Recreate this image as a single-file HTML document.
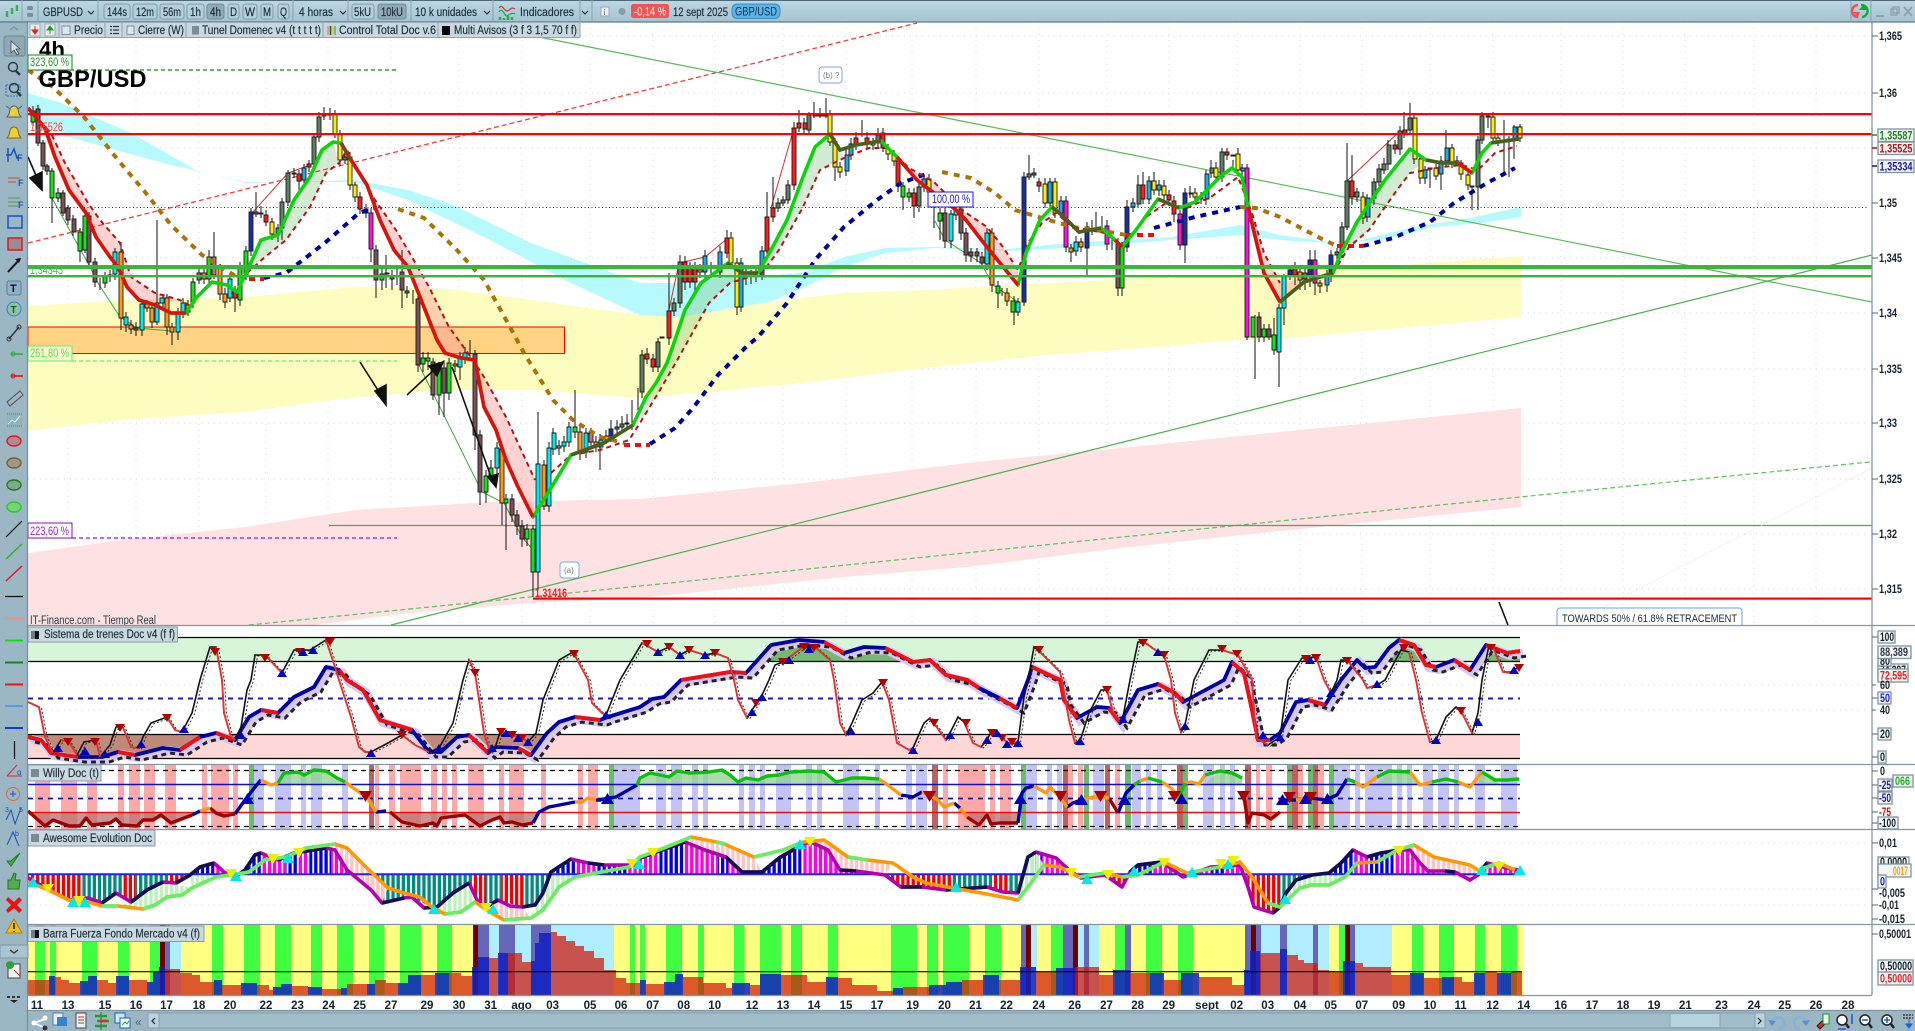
<!DOCTYPE html>
<html><head><meta charset="utf-8"><title>GBP/USD</title>
<style>
html,body{margin:0;padding:0;background:#fff;overflow:hidden}
svg{display:block}
text{font-family:"Liberation Sans",sans-serif;font-size:11.5px;fill:#1b2a34}
.ax{font-size:11.5px;font-weight:bold;fill:#14222c}
.lb{font-size:11.5px;fill:#1b2a34;stroke:#1b2a34;stroke-width:.15}
.bx{fill:#f4f6f6;stroke:#7d939f;stroke-width:1.3}
.bt{fill:#b4cfdb;stroke:#7f9daa;stroke-width:1}
.bp{fill:#8fa9b5;stroke:#6f8995;stroke-width:1}
.sp{stroke:#86a3b0;stroke-width:1}
</style></head><body>
<svg xmlns="http://www.w3.org/2000/svg" width="1915" height="1031" viewBox="0 0 1915 1031">
<defs>
<linearGradient id="tb" x1="0" y1="0" x2="0" y2="1"><stop offset="0" stop-color="#bdd7e3"/><stop offset="1" stop-color="#a4c3d0"/></linearGradient>
<clipPath id="cm"><rect x="28" y="22" width="1844" height="603"/></clipPath>
<clipPath id="c2"><rect x="28" y="626" width="1844" height="138"/></clipPath>
<clipPath id="c3"><rect x="28" y="765" width="1844" height="64"/></clipPath>
<clipPath id="c4"><rect x="28" y="830" width="1844" height="94"/></clipPath>
<pattern id="pB" width="5.15" height="10" patternUnits="userSpaceOnUse"><rect width="3.3" height="10" fill="#0000e0"/></pattern>
<pattern id="pM" width="5.15" height="10" patternUnits="userSpaceOnUse"><rect width="3.3" height="10" fill="#ff00e0"/></pattern>
<pattern id="pR" width="5.15" height="10" patternUnits="userSpaceOnUse"><rect width="3.3" height="10" fill="#f00000"/></pattern>
<pattern id="pT" width="5.15" height="10" patternUnits="userSpaceOnUse"><rect width="3.3" height="10" fill="#008a80"/></pattern>
<pattern id="pP" width="5.15" height="10" patternUnits="userSpaceOnUse"><rect width="3.3" height="10" fill="#ffc4c4"/></pattern>
<pattern id="pG" width="5.15" height="10" patternUnits="userSpaceOnUse"><rect width="3.3" height="10" fill="#bdf2bd"/></pattern>
<clipPath id="hA"><path d="M28 874L28 878L53 892L69 900L88 898L102 903L116 893L131 902L147 890L163 882L176 883L190 875L200 867L214 863L224 872L235 877L245 870L255 855L261 853L278 860L294 853L326 848L335 850L347 870L359 880L371 890L382 903L404 898L412 897L424 908L437 907L453 893L469 883L478 902L486 907L498 900L510 906L522 907L535 905L543 893L551 872L571 859L588 863L604 865L629 865L640 858L662 850L685 842L705 850L720 855L726 857L742 872L762 872L779 858L793 850L801 843L813 843L828 850L840 870L856 871L885 875L901 887L922 887L946 890L987 887L1003 892L1018 893L1028 857L1036 852L1056 858L1069 870L1081 878L1105 875L1122 887L1130 872L1138 865L1162 862L1183 877L1211 867L1240 865L1248 887L1254 907L1273 913L1280 907L1286 893L1296 880L1312 875L1329 873L1341 863L1353 850L1367 857L1381 853L1399 850L1410 850L1420 863L1428 871L1445 871L1455 872L1470 880L1478 875L1487 863L1507 868L1519 870L1522 874z"/></clipPath>
</defs>

<rect width="1915" height="1031" fill="#fff"/>

<!-- MAIN PANE -->
<g clip-path="url(#cm)">
<path d="M28 36H1870M28 93H1870M28 148H1870M28 258H1870M28 313H1870M28 369H1870M28 423H1870M28 479H1870M28 534H1870M28 589H1870" stroke="#d5d5d5" stroke-dasharray="1 5" fill="none"/>
<path d="M68 22V625M136 22V625M199 22V625M266 22V625M328 22V625M391 22V625M459 22V625M522 22V625M590 22V625M653 22V625M715 22V625M783 22V625M846 22V625M912 22V625M976 22V625M1039 22V625M1107 22V625M1169 22V625M1237 22V625M1300 22V625M1362 22V625M1430 22V625M1493 22V625M1561 22V625M1623 22V625M1685 22V625M1754 22V625M1816 22V625" stroke="#dcdcdc" stroke-dasharray="1 5" fill="none"/>
<path d="M28 93L61 103L131 133L196 170L245 183L355 180L408 190L449 203L531 243L640 283L681 283L722 278L762 276L803 273L844 257L885 248L934 247L1007 249L1069 243L1171 237L1240 225L1280 235L1329 242L1361 240L1414 227L1470 218L1521 207V217L1482 223L1434 227L1381 240L1329 243L1280 240L1240 235L1171 240L1069 248L1007 251L934 248L885 253L844 267L803 288L762 305L722 310L681 318L640 315L571 283L490 240L408 200L355 182L245 182L163 163L69 137L28 115z" fill="#b6fafd"/>
<path d="M28 306L122 300L245 297L355 287L449 289L531 300L640 315L681 317L762 303L844 293L926 290L1048 283L1171 277L1280 273L1401 265L1521 256V317L1280 339L1236 340L1171 346L1048 355L926 368L803 383L652 397L640 398L531 390L449 390L355 397L245 412L122 420L28 431z" fill="#fefdc0"/>
<path d="M28 553L122 540L245 527L355 510L490 502L640 499L803 483L967 463L1130 447L1280 432L1521 408V507L1280 531L1130 547L967 567L844 577L640 598L531 603L408 613L314 625H28z" fill="#fee1e3"/>
<rect x="28" y="327" width="536.500" height="26.500" fill="#ff9a30" fill-opacity=".42" stroke="#f00" stroke-width="1"/>
<path d="M28 112L40 125L55 157L69 190L86 213L96 237L110 257L118 267L127 287L139 300L155 305L180 300L155 293L131 277L120 243L100 220L88 203L65 163L51 133z" fill="#ff9c9c" fill-opacity=".45"/>
<path d="M351 160L367 185L380 220L394 250L408 267L420 297L433 330L445 353L461 358L475 360L484 407L496 430L506 460L518 487L533 517L535 480L506 417L484 377L473 360L449 327L429 287L412 257L396 230L375 200L359 173L347 150z" fill="#ff9c9c" fill-opacity=".45"/>
<path d="M897 157L917 180L956 210L966 220L983 242L995 257L1018 285L1018 270L1003 247L987 227L962 210L934 182L909 168L889 148z" fill="#ff9c9c" fill-opacity=".45"/>
<path d="M1248 207L1256 240L1264 273L1280 302L1304 282L1333 273L1280 283L1264 253L1252 213z" fill="#ff9c9c" fill-opacity=".45"/>
<path d="M249 267L261 240L278 235L294 200L310 177L322 150L333 142L339 163L326 173L310 207L286 240L265 257L247 273z" fill="#7fc77f" fill-opacity=".35"/>
<path d="M646 397L656 383L667 363L675 340L685 310L701 283L728 263L762 273L771 250L787 220L803 177L815 147L830 134L844 158L820 170L803 207L779 250L762 273L730 283L709 303L689 339L679 357L660 390L640 423z" fill="#7fc77f" fill-opacity=".35"/>
<path d="M1341 253L1357 222L1385 180L1410 149L1426 160L1410 173L1397 190L1369 230L1349 247z" fill="#7fc77f" fill-opacity=".35"/>
<path d="M28 243L917 23" stroke="#f43c3c" stroke-width="1.3" stroke-dasharray="5 3" fill="none"/>
<path d="M28 70H397" stroke="#0a8a0a" stroke-width="1.2" stroke-dasharray="4 3" fill="none"/>
<path d="M72 361H397" stroke="#66f066" stroke-width="1.2" stroke-dasharray="4 3" fill="none"/>
<path d="M72 538H397" stroke="#a010d0" stroke-width="1.2" stroke-dasharray="4 3" fill="none"/>
<path d="M539 37L1872 302" stroke="#59b959" stroke-width="1.2" fill="none"/>
<path d="M391 625L1872 255" stroke="#4cb04c" stroke-width="1.2" fill="none"/>
<path d="M249 625L640 586L1280 521L1870 462" stroke="#5cc05c" stroke-width="1.2" stroke-dasharray="5 3" fill="none"/>
<path d="M329 525.500H1872" stroke="#4ea84e" stroke-width="1.2" fill="none"/>
<path d="M28 207.500H1869" stroke="#1a1ab4" stroke-dasharray="1 2.500" fill="none"/>
<path d="M1604 607L1872 468" stroke="#ddd" stroke-dasharray="1 2" fill="none"/>
<path d="M52 198L90 267L98 283L120 317L137 328L171 331M418 363L482 492L504 503L522 537L533 550M935 221L945 240L981 263L993 285L1018 302" stroke="#3ca83c" fill="none"/>
<path d="M253 212L288 173L310 165M669 310L679 263L705 257L728 238M771 208L794 128M1347 181L1400 131" stroke="#c83030" fill="none"/>

<!-- wicks -->
<path d="M33 106V126M38 105V146M43 140V170M47 164V175M52 168V223M58 188V202M63 190V216M68 205V225M73 215V236M80 228V262M85 212V253M89 212V268M95 258V287M100 278V290M105 272V288M110 270V282M115 248V280M121 242V330M126 312V332M131 320V334M136 322V336M142 300V336M147 300V312M152 304V328M157 220V325M163 294V310M167 294V335M172 323V345M178 308V340M183 298V318M188 300V316M193 278V308M199 268V284M204 268V284M209 250V283M214 232V279M220 264V300M225 288V308M230 274V302M235 286V312M240 262V306M246 246V280M251 208V256M256 192V217M261 206V218M266 210V226M272 218V240M278 224V242M282 198V240M288 170V206M294 168V178M299 170V192M304 164V184M309 160V172M314 133V170M319 112V142M324 107V120M330 108V120M335 110V138M340 130V166M345 152V164M350 152V190M355 182V202M360 192V214M366 204V218M371 208V262M376 245V298M382 268V290M386 255V288M392 270V290M397 268V285M402 250V308M407 286V298M413 290V304M418 295V372M423 352V372M428 352V370M433 358V400M439 362V415M444 360V417M449 358V400M455 360V372M460 352V380M465 347V364M470 340V360M475 350V450M480 430V505M486 470V503M491 460V482M497 442V475M502 444V525M506 494V550M512 494V522M517 510V535M522 520V547M527 524V546M533 525V597M538 412V590M544 460V510M549 442V512M553 428V455M559 440V455M564 436V452M569 422V447M575 390V438M580 426V460M586 428V458M591 428V447M596 436V452M600 434V470M606 430V444M611 420V442M617 420V434M622 416V432M627 414V428M632 400V430M638 388V410M642 350V398M647 348V364M653 354V372M658 338V372M669 273V345M674 298V316M680 255V308M685 256V290M690 262V288M695 262V296M700 264V278M705 250V280M711 262V278M720 246V278M727 230V258M731 232V268M737 258V315M741 258V312M746 268V285M751 270V284M756 268V282M762 246V280M767 192V256M773 177V222M778 198V212M783 196V206M788 180V204M794 122V190M799 110V132M804 118V134M809 112V134M814 102V118M820 108V118M826 98V118M830 110V146M835 138V181M840 162V178M846 150V176M851 138V160M856 132V150M862 120V137M867 132V150M873 138V150M878 128V148M883 128V152M888 144V160M894 150V166M898 156V192M903 182V210M909 188V202M914 188V218M919 182V212M924 174V192M929 174V198M934 204V228M940 208V240M945 208V248M951 210V248M956 205V220M961 204V240M966 228V262M971 248V262M977 248V262M982 252V268M987 228V270M992 228V292M998 281V308M1002 288V296M1007 288V306M1014 296V325M1018 298V316M1024 172V306M1029 155V180M1034 168V178M1039 178V192M1045 178V208M1050 178V208M1055 178V218M1061 196V218M1066 196V252M1071 244V262M1076 236V256M1081 238V252M1087 222V275M1092 220V235M1096 212V232M1102 216V232M1107 220V250M1112 238V250M1118 238V296M1122 242V296M1127 200V252M1133 198V212M1138 175V208M1143 172V204M1149 176V204M1154 172V195M1159 180V196M1164 180V200M1169 190V206M1174 196V222M1180 210V250M1185 188V263M1190 186V198M1195 188V202M1201 192V204M1206 170V205M1211 160V178M1216 162V182M1222 148V182M1227 148V160M1233 160V170M1238 148V176M1242 164V176M1247 164V340M1255 315V379M1259 312V342M1264 324V342M1269 324V340M1274 318V355M1279 304V387M1284 274V325M1290 265V280M1295 262V285M1300 268V290M1305 268V290M1310 250V287M1315 250V295M1320 280V293M1327 270V292M1331 250V282M1337 248V260M1342 222V258M1347 143V230M1352 155V205M1357 188V202M1363 192V224M1367 194V222M1374 178V205M1379 164V186M1384 158V174M1388 140V170M1395 140V154M1400 126V155M1404 112V138M1410 103V134M1414 114V164M1420 156V184M1425 166V184M1430 168V188M1436 164V180M1441 156V190M1446 130V166M1452 144V168M1457 156V166M1461 160V180M1468 172V190M1472 187V210M1478 136V210M1482 112V144M1488 114V128M1493 112V142M1498 134V146M1504 120V172M1509 136V177M1514 125V159M1520 124V142" stroke="#111" stroke-width="1" fill="none"/>

<g stroke="#1a1a1a" stroke-width=".9">
<path fill="#14e814" d="M31 111h4v11h-4zM50 171h4v27h-4zM56 193h4v5h-4zM78 232h4v19h-4zM83 216h4v34h-4zM103 277h4v6h-4zM191 282h4v21h-4zM207 257h4v22h-4zM238 268h4v32h-4zM244 251h4v24h-4zM380 274h4v6h-4zM421 358h4v6h-4zM426 358h4v3h-4zM437 368h4v27h-4zM447 363h4v30h-4zM484 476h4v16h-4zM489 468h4v8h-4zM504 499h4v4h-4zM525 529h4v10h-4zM531 529h4v43h-4zM573 427h4v5h-4zM901 186h4v11h-4zM907 193h4v4h-4zM938 213h4v8h-4zM996 286h4v7h-4zM1011 301h4v11h-4zM1120 247h4v41h-4zM1251 317h4v20h-4zM1262 329h4v8h-4zM1272 335h4v15h-4z"/>
<path fill="#7a5158" d="M36 109h4v34h-4zM41 143h4v23h-4zM45 166h4v5h-4zM61 193h4v20h-4zM66 208h4v12h-4zM72 219h4v13h-4zM87 216h4v46h-4zM93 262h4v20h-4zM374 250h4v30h-4zM400 272h4v18h-4zM416 299h4v66h-4zM431 362h4v33h-4zM442 368h4v25h-4zM473 354h4v81h-4zM478 435h4v57h-4zM510 499h4v16h-4zM515 515h4v11h-4zM520 526h4v13h-4zM943 213h4v28h-4zM959 209h4v24h-4zM964 233h4v22h-4zM969 252h4v4h-4zM975 252h4v4h-4zM980 257h4v6h-4zM1116 243h4v45h-4zM1257 317h4v20h-4zM1267 329h4v8h-4z"/>
<path fill="#d06a80" d="M212 257h4v18h-4zM589 433h4v9h-4z"/>
<path fill="#5f7f62" d="M108 275h4v1h-4zM134 328h4v2h-4zM197 273h4v7h-4zM254 212h4v2h-4zM259 213h4v1h-4zM276 228h4v6h-4zM280 202h4v26h-4zM286 173h4v29h-4zM292 173h4v1h-4zM312 137h4v27h-4zM317 117h4v20h-4zM322 114h4v2h-4zM328 114h4v1h-4zM343 157h4v3h-4zM385 273h4v1h-4zM390 277h4v2h-4zM405 291h4v2h-4zM620 424h4v3h-4zM615 427h4v2h-4zM625 423h4v1h-4zM640 355h4v37h-4zM656 342h4v25h-4zM660 337h4v1h-4zM672 303h4v8h-4zM678 262h4v41h-4zM776 203h4v5h-4zM781 200h4v3h-4zM786 185h4v15h-4zM807 115h4v15h-4zM813 115h4v1h-4zM818 115h4v1h-4zM823 115h4v1h-4zM860 144h4v1h-4zM876 135h4v8h-4zM917 187h4v19h-4zM1027 174h4v3h-4zM1032 173h4v2h-4zM1137 185h4v19h-4zM1189 193h4v1h-4zM1210 168h4v5h-4zM1220 152h4v25h-4zM1231 155h4v1h-4zM1303 273h4v6h-4zM1335 252h4v3h-4zM1340 227h4v25h-4zM1345 181h4v46h-4zM1355 192h4v5h-4zM1372 182h4v16h-4zM1377 169h4v13h-4zM1382 164h4v6h-4zM1387 145h4v19h-4zM1398 131h4v18h-4zM1408 118h4v12h-4zM1428 168h4v1h-4zM1470 186h4v1h-4zM1476 140h4v47h-4zM1480 116h4v24h-4zM1486 116h4v1h-4zM1502 141h4v1h-4zM1507 139h4v2h-4z"/>
<path fill="#00eaf2" d="M113 252h4v22h-4zM124 317h4v8h-4zM140 304h4v26h-4zM155 303h4v19h-4zM160 298h4v5h-4zM176 313h4v19h-4zM181 303h4v10h-4zM228 279h4v19h-4zM458 358h4v9h-4zM463 353h4v5h-4zM495 448h4v20h-4zM536 464h4v108h-4zM547 448h4v58h-4zM552 433h4v16h-4zM557 446h4v2h-4zM562 442h4v4h-4zM567 427h4v15h-4zM584 433h4v19h-4zM599 440h4v7h-4zM949 214h4v27h-4zM954 210h4v5h-4zM985 233h4v31h-4zM1016 302h4v10h-4zM1074 242h4v9h-4zM1277 308h4v44h-4zM1282 277h4v31h-4z"/>
<path fill="#1fa8e8" d="M302 168h4v12h-4zM703 256h4v16h-4zM718 252h4v20h-4zM739 263h4v44h-4zM760 251h4v24h-4zM845 155h4v16h-4zM849 144h4v11h-4zM922 179h4v8h-4zM1048 182h4v21h-4zM1059 201h4v12h-4zM1131 203h4v4h-4zM1147 181h4v18h-4zM1157 185h4v5h-4zM1205 174h4v25h-4zM1241 168h4v3h-4zM1325 276h4v9h-4zM1366 198h4v19h-4zM1423 170h4v8h-4zM1439 161h4v13h-4zM1445 148h4v13h-4zM1455 161h4v2h-4zM1513 127h4v12h-4z"/>
<path fill="#ff9a18" d="M119 252h4v66h-4zM129 325h4v4h-4zM145 304h4v4h-4zM150 308h4v14h-4zM165 298h4v29h-4zM170 327h4v5h-4zM186 305h4v7h-4zM202 273h4v6h-4zM218 268h4v26h-4zM223 294h4v8h-4zM453 364h4v2h-4zM500 449h4v54h-4zM542 465h4v41h-4zM578 432h4v20h-4zM594 442h4v5h-4zM605 436h4v4h-4zM990 233h4v52h-4zM1005 293h4v8h-4zM1069 248h4v4h-4zM1079 242h4v5h-4zM1298 272h4v8h-4zM1318 283h4v3h-4z"/>
<path fill="#ff1c1c" d="M264 215h4v7h-4zM297 174h4v7h-4zM307 164h4v3h-4zM358 197h4v12h-4zM364 209h4v4h-4zM233 291h4v7h-4zM645 354h4v5h-4zM651 359h4v8h-4zM667 311h4v27h-4zM683 262h4v20h-4zM688 268h4v14h-4zM693 268h4v14h-4zM725 238h4v15h-4zM765 217h4v34h-4zM771 208h4v9h-4zM792 128h4v57h-4zM797 123h4v5h-4zM803 123h4v6h-4zM854 138h4v6h-4zM865 138h4v6h-4zM881 133h4v15h-4zM896 161h4v25h-4zM912 193h4v13h-4zM1037 182h4v4h-4zM1141 185h4v14h-4zM1167 195h4v5h-4zM1172 201h4v13h-4zM1199 197h4v2h-4zM1225 152h4v3h-4zM1293 268h4v7h-4zM1350 181h4v16h-4zM1393 145h4v4h-4zM1403 130h4v4h-4z"/>
<path fill="#ffee00" d="M270 222h4v12h-4zM333 114h4v20h-4zM338 134h4v26h-4zM348 157h4v28h-4zM353 185h4v12h-4zM698 270h4v2h-4zM729 238h4v25h-4zM735 263h4v44h-4zM828 114h4v28h-4zM833 142h4v25h-4zM838 167h4v5h-4zM871 143h4v2h-4zM886 148h4v6h-4zM892 154h4v7h-4zM927 179h4v13h-4zM1043 184h4v19h-4zM1053 182h4v31h-4zM1152 181h4v9h-4zM1162 186h4v9h-4zM1193 193h4v4h-4zM1214 168h4v9h-4zM1236 154h4v16h-4zM1361 197h4v21h-4zM1413 118h4v41h-4zM1419 159h4v19h-4zM1434 168h4v8h-4zM1450 148h4v15h-4zM1459 163h4v11h-4zM1466 175h4v10h-4zM1491 117h4v21h-4zM1496 138h4v3h-4zM1518 127h4v11h-4z"/>
<path fill="#ff10e0" d="M369 213h4v36h-4zM1064 201h4v46h-4zM1105 226h4v18h-4zM1178 214h4v31h-4zM1245 168h4v169h-4zM1313 260h4v23h-4z"/>
<path fill="#1a2ea8" d="M249 212h4v39h-4zM609 429h4v7h-4zM1022 177h4v125h-4zM1085 227h4v21h-4zM1125 207h4v40h-4zM1183 193h4v52h-4zM1288 270h4v5h-4zM1308 260h4v15h-4zM1329 255h4v20h-4z"/>
</g>

<!-- MAs -->
<path d="M28 70L53 87L84 117L118 160L145 192L171 225L202 255L237 277M398 209L424 218L455 248L484 280L510 327L524 353L553 400L573 420L600 437L624 443M942 172L971 178L995 193L1015 210L1042 218L1073 227L1109 232L1126 235M1240 207L1256 208L1280 217L1320 238L1337 246" fill="none" stroke="#a97405" stroke-width="4" stroke-dasharray="6 6"/>
<path d="M264 278L286 273L326 242L359 213L375 208M650 444L675 428L693 408L718 375L748 345L758 337L787 303L815 260L844 227L877 200L901 183L926 174M1154 228L1195 217L1240 207M1363 246L1393 238L1430 222L1454 203L1487 183L1515 168" fill="none" stroke="#00009c" stroke-width="4" stroke-dasharray="6 6"/>
<path d="M249 279H264M624 445H650M1126 235H1154M1337 246H1363" fill="none" stroke="#e81010" stroke-width="4" stroke-dasharray="6 5"/>
<path d="M28 108L51 133L65 163L88 203L100 220L120 243L131 277L155 293L180 300L192 307M247 273L265 257L286 240L310 207L326 173L339 163L347 150L359 173L375 200L396 230L412 257L429 287L449 327L473 360L484 377L506 417L535 480M551 473L571 455L600 450L629 440L640 423L660 390L679 357L689 339L709 303L730 283L762 273L779 250L803 207L820 170L844 158L869 148L889 148L909 168L934 182L962 210L987 227L1003 247L1018 270L1028 243L1042 223L1056 213L1073 227L1105 233L1122 245L1146 217L1166 203L1187 208L1211 197L1238 177L1252 213L1264 253L1280 283M1333 273L1349 247L1369 230L1397 190L1410 173L1442 167L1462 165L1478 170L1495 153L1517 146" fill="none" stroke="#b01515" stroke-width="2" stroke-dasharray="5 4"/>
<path d="M28 108L45 128L55 157L69 190L86 213L96 237L110 257L118 267L127 287L139 300L155 305L171 313L186 313L196 298L212 282L227 285L237 292L249 267L261 240L278 235L294 200L310 177L322 150L333 142L341 143L351 160L367 185L380 220L394 250L408 267L420 297L433 330L437 340L445 353L461 358L475 360L484 407L496 430L506 460L518 487L533 517L551 488L571 455L604 443L633 425L646 397L656 383L667 363L675 340L685 310L701 283L728 263L742 273L758 273L771 250L787 220L803 177L815 147L830 134L840 150L856 145L881 141L897 157L917 180L956 210L966 220L983 242L995 257L1018 285L1026 253L1040 220L1052 207L1064 217L1079 232L1101 228L1115 240L1122 247L1136 230L1158 199L1179 208L1195 202L1220 177L1232 168L1242 177L1248 207L1256 240L1264 273L1280 302L1304 282L1333 273L1341 253L1357 222L1385 180L1410 149L1426 160L1442 163L1458 163L1472 173L1482 153L1491 143L1519 139" fill="none" stroke="#0bd40b" stroke-width="3.600" stroke-linejoin="round"/>
<path d="M28 108L45 128L55 157L69 190L86 213L96 237L110 257L118 267L127 287L139 300L155 305L171 313L186 313M351 160L367 185L380 220L394 250L408 267L420 297L433 330L437 340L445 353L461 358L475 360L484 407L496 430L506 460L518 487L533 517M897 157L917 180L956 210L966 220L983 242L995 257L1018 285M1248 207L1256 240L1264 273L1280 302M1115 240L1122 247M1458 163L1472 173" fill="none" stroke="#e00f0f" stroke-width="3.600" stroke-linejoin="round"/>
<path d="M571 455L604 443L633 425M727 263L742 273L758 273M830 134L840 150L856 145L881 141M1052 207L1064 217L1079 232L1101 228M1158 199L1179 208M1426 160L1442 163L1458 163M1491 143L1519 139M1280 302L1304 282L1333 273" fill="none" stroke="#4f5c1e" stroke-width="3.600"/>
<path d="M351 160L341 143" fill="none" stroke="#8a3a1a" stroke-width="3.600"/>

<!-- horizontals over candles -->
<rect x="28" y="113" width="1844" height="2.200" fill="#f00"/>
<rect x="28" y="133" width="1844" height="2.200" fill="#f00"/>
<rect x="28" y="265" width="1844" height="4.200" fill="#3cb43c"/>
<rect x="28" y="275" width="1844" height="2.400" fill="#3cb43c"/>
<rect x="533" y="597.500" width="1339" height="2.200" fill="#f00"/>

<!-- arrows -->
<g stroke="#111" stroke-width="1.600" fill="#111">
<path d="M28 157L38 180" fill="none"/><path d="M42 190L30 178L42 172z"/>
<path d="M360 362L381 395" fill="none"/><path d="M386 405L375 391L386 385z"/>
<path d="M407 395L436 368" fill="none"/><path d="M443 362L437 376L429 366z"/>
<path d="M452 367L491 477" fill="none"/><path d="M496 487L488 477L498 474z"/>
<path d="M1499 602L1508 625" fill="none"/>
</g>

<!-- text overlays -->
<text x="39" y="57" style="font-size:22px;font-weight:bold;fill:#000" textLength="26" lengthAdjust="spacingAndGlyphs">4h</text>
<text x="38.500" y="87" style="font-size:24px;font-weight:bold;fill:#000" textLength="108" lengthAdjust="spacingAndGlyphs">GBP/USD</text>
<rect x="28" y="55" width="44" height="15" fill="#fff" stroke="#0a8a0a" stroke-width="1"/>
<text x="30" y="66" style="fill:#1a9a2a" textLength="39" lengthAdjust="spacingAndGlyphs">323,60 %</text>
<text x="30" y="131" style="fill:#f04040" textLength="33" lengthAdjust="spacingAndGlyphs">1,35526</text>
<text x="30" y="274" style="fill:#4cc04c" textLength="33" lengthAdjust="spacingAndGlyphs">1,34343</text>
<rect x="28" y="346" width="44" height="15" fill="#fdf8d0" stroke="#66f066" stroke-width="1"/>
<text x="30" y="357" style="fill:#50e050" textLength="39" lengthAdjust="spacingAndGlyphs">261,80 %</text>
<rect x="28" y="523" width="44" height="15" fill="#fff" stroke="#8a10b0" stroke-width="1"/>
<text x="30" y="535" style="fill:#9a20d0" textLength="39" lengthAdjust="spacingAndGlyphs">223,60 %</text>
<text x="30" y="624" style="fill:#2a3a44" textLength="126" lengthAdjust="spacingAndGlyphs">IT-Finance.com - Tiempo Real</text>
<rect x="819" y="67" width="23" height="16" rx="3" fill="#fff" stroke="#7aa6f0"/>
<text x="823" y="78" style="font-size:8px;fill:#777">(b) ?</text>
<rect x="560" y="562" width="19" height="16" rx="3" fill="#fff" stroke="#7aa6f0"/>
<text x="564" y="573" style="font-size:8px;fill:#777">(a)</text>
<text x="535" y="597" style="fill:#f02020;font-weight:bold" textLength="32" lengthAdjust="spacingAndGlyphs">1,31416</text>
<rect x="928" y="192" width="45" height="15" fill="#fff" stroke="#1a1ad0"/>
<text x="932" y="203" style="fill:#1a1ad0" textLength="38" lengthAdjust="spacingAndGlyphs">100,00 %</text>
<rect x="1557" y="608" width="185" height="24" rx="3" fill="#fff" stroke="#6e9ff0"/>
<text x="1562" y="622" style="font-size:11px;fill:#1b2a34" textLength="175" lengthAdjust="spacingAndGlyphs">TOWARDS 50% / 61.8% RETRACEMENT</text>
</g>

<!-- PANE 2 -->
<g clip-path="url(#c2)">
<path d="M28 685H1870M28 710H1870" stroke="#d8d8d8" stroke-dasharray="1 5"/>
<rect x="28" y="637" width="1492" height="24.500" fill="#d7f5d7"/>
<rect x="28" y="734" width="1492" height="24" fill="#ffd7d7"/>
<path d="M28 734L28 737L41 740L51 753L78 757L102 757L118 752L135 755L163 748L180 750L200 737L216 733L235 740V734zM405 734L412 730L429 752L441 752L457 737L469 735L488 753L496 747L518 748L531 755L547 734z" fill="#c08a78"/>
<path d="M754 661L771 645L799 640L824 642L844 653L864 647L885 648L905 661zM1383 661L1389 648L1399 640L1414 645L1424 661zM1481 661L1486 645L1507 653L1520 651V661z" fill="#74ba74"/>
<path d="M28 637.500H1520M28 661.500H1520M28 734.500H1520M28 758.500H1520" stroke="#000" stroke-width="1.200"/>
<path d="M28 698.500H1520" stroke="#1a1ad0" stroke-width="2" stroke-dasharray="5 5"/>
<path id="ps" fill="none" d="M28 737L41 740L51 753L78 757L102 757L118 752L135 755L163 748L180 750L200 737L216 733L235 740L249 717L261 710L278 713L294 697L314 687L326 667L339 670L347 680L363 690L380 720L396 725L412 730L429 752L441 752L457 737L469 735L488 753L496 747L518 748L531 755L547 733L559 722L575 717L600 720L608 717L640 707L652 699L664 697L681 680L730 672L746 673L771 645L799 640L824 642L844 653L864 647L885 648L913 662L930 660L946 675L967 680L979 688L999 698L1017 708L1028 680L1032 667L1060 680L1064 700L1077 718L1097 707L1109 708L1120 723L1138 690L1158 684L1175 693L1183 702L1211 687L1224 680L1232 662L1244 673L1252 710L1258 740L1270 740L1280 733L1296 702L1308 700L1325 705L1341 680L1357 660L1365 668L1375 667L1389 648L1399 640L1414 645L1426 665L1436 667L1454 660L1470 670L1486 645L1507 653L1520 651"/>
<use href="#ps" transform="translate(3 2.500)" stroke="#d9c9f0" stroke-width="9" fill="none"/>
<use href="#ps" transform="translate(7 5)" stroke="#222" stroke-width="3" stroke-dasharray="5 4" fill="none"/>
<use href="#ps" stroke="#0000a8" stroke-width="3.800" stroke-linejoin="round" fill="none"/>
<path d="M28 737L41 740L51 753L78 757M118 752L135 755M180 750L200 737M216 733L235 740M261 710L278 713M339 670L347 680L363 690L380 720L396 725L412 730M469 735L488 753M518 748L531 755M575 717L600 720M681 680L730 672L746 673M824 642L844 653M885 648L913 662L930 660L946 675L967 680L979 688M999 698L1017 708M1032 667L1060 680L1064 700L1077 718M1109 708L1120 723M1158 684L1175 693L1183 702M1232 662L1244 673L1252 710L1258 740L1270 740M1308 700L1325 705M1399 640L1414 645L1426 665L1436 667M1454 660L1470 670M1486 645L1507 653L1520 651" stroke="#f01010" stroke-width="3.800" fill="none" stroke-linejoin="round"/>
<path id="pt" fill="none" d="M28 702L39 707L45 737L53 753L61 740L69 742L77 755L84 742L96 740L100 757L110 745L116 727L122 725L131 747L139 748L143 737L151 723L167 717L175 730L182 732L192 713L200 680L210 647L216 647L222 680L224 713L231 737L235 740L241 727L247 690L251 680L255 655L265 655L282 673L294 650L310 650L326 640L337 673L339 680L351 717L359 747L365 752L371 752L388 743L402 735L415 745L429 752L439 748L453 723L463 680L469 660L475 673L484 733L490 752L496 745L500 732L512 735L522 738L528 742L536 733L543 700L551 680L559 660L573 652L588 680L592 703L602 713L606 715L620 680L639 648L642 643L658 652L669 647L680 655L689 650L705 655L715 653L728 658L734 680L738 700L747 718L752 710L762 695L769 680L775 665L783 662L803 647L815 647L830 660L834 680L840 723L846 735L852 723L862 700L873 693L882 682L889 700L897 743L909 750L913 748L924 723L930 718L946 740L950 733L958 717L964 722L973 743L981 747L987 740L991 732L997 732L1007 743L1013 743L1018 742L1024 697L1028 680L1034 647L1038 650L1060 672L1062 680L1069 720L1075 743L1080 741L1089 713L1101 690L1107 690L1113 712L1122 722L1130 680L1138 642L1144 642L1158 652L1164 655L1171 680L1175 713L1181 732L1185 725L1194 680L1209 650L1222 650L1238 655L1252 680L1256 738L1268 745L1280 737L1288 680L1302 658L1316 657L1324 680L1331 693L1337 680L1341 660L1347 660L1363 680L1367 688L1377 685L1385 680L1401 650L1409 652L1416 680L1422 713L1430 742L1436 740L1446 717L1456 707L1461 711L1472 733L1478 713L1482 680L1489 645L1493 647L1503 672L1511 672L1514 670L1519 667"/>
<use href="#pt" transform="translate(2.500 1)" stroke="#333" stroke-width="1" stroke-dasharray="2 2" fill="none"/>
<use href="#pt" stroke="#111" stroke-width="1.600" fill="none"/>
<path d="M28 702L39 707L45 737L53 753M61 740L69 742L77 755M96 740L100 757M122 725L131 747L139 748M167 717L175 730L182 732M216 647L222 680L224 713L231 737L235 740M265 655L282 673M326 640L337 673L339 680L351 717L359 747L365 752L371 752M402 735L415 745L429 752M469 660L475 673L484 733L490 752M500 732L512 735L522 738L528 742M573 652L588 680L592 703L602 713L606 715M642 643L658 652M669 647L680 655M689 650L705 655M715 653L728 658L734 680L738 700L747 718M783 662L803 647M815 647L830 660L834 680L840 723L846 735M882 682L889 700L897 743L909 750L913 748M930 718L946 740M964 722L973 743L981 747M997 732L1007 743L1013 743L1018 742M1038 650L1060 672L1062 680L1069 720L1075 743M1107 690L1113 712L1122 722M1144 642L1158 652L1164 655L1171 680L1175 713L1181 732M1222 650L1238 655L1252 680L1256 738L1268 745M1316 657L1324 680L1331 693M1347 660L1363 680L1367 688L1377 685M1409 652L1416 680L1422 713L1430 742M1461 711L1472 733M1493 647L1503 672L1511 672" stroke="#e83030" stroke-width="1.800" fill="none"/>
<path fill="#b00000" d="M63 738h10l-5 8zM90 738h10l-5 8zM115 724h10l-5 8zM162 714h10l-5 8zM397 731h10l-5 8zM496 728h10l-5 8zM507 731h10l-5 8zM517 734h10l-5 8zM210 648h10l-5 8zM260 654h10l-5 8zM295 648h10l-5 8zM325 638h10l-5 8zM470 669h10l-5 8zM569 650h10l-5 8zM642 640h10l-5 8zM664 643h10l-5 8zM684 646h10l-5 8zM710 649h10l-5 8zM778 658h10l-5 8zM799 643h10l-5 8zM809 644h10l-5 8zM1034 646h10l-5 8zM1138 639h10l-5 8zM1159 651h10l-5 8zM1217 645h10l-5 8zM1232 650h10l-5 8zM878 679h10l-5 8zM751 699h10l-5 8zM929 719h10l-5 8zM961 719h10l-5 8zM987 729h10l-5 8zM997 734h10l-5 8zM1007 738h10l-5 8zM1102 686h10l-5 8zM1301 655h10l-5 8zM1311 654h10l-5 8zM1342 657h10l-5 8zM1399 644h10l-5 8zM1486 644h10l-5 8zM1514 664h10l-5 8zM1456 707h10l-5 8z"/>
<path fill="#0000c0" d="M53 752h10l-5-8zM80 755h10l-5-8zM100 758h10l-5-8zM136 748h10l-5-8zM179 733h10l-5-8zM236 739h10l-5-8zM366 757h10l-5-8zM434 752h10l-5-8zM487 752h10l-5-8zM501 737h10l-5-8zM513 742h10l-5-8zM523 746h10l-5-8zM601 719h10l-5-8zM277 677h10l-5-8zM298 656h10l-5-8zM308 654h10l-5-8zM653 656h10l-5-8zM675 659h10l-5-8zM700 659h10l-5-8zM784 664h10l-5-8zM804 653h10l-5-8zM1153 656h10l-5-8zM747 716h10l-5-8zM757 701h10l-5-8zM846 735h10l-5-8zM908 754h10l-5-8zM945 739h10l-5-8zM982 744h10l-5-8zM992 737h10l-5-8zM1002 748h10l-5-8zM1013 747h10l-5-8zM1075 745h10l-5-8zM1118 723h10l-5-8zM1180 730h10l-5-8zM1258 739h10l-5-8zM1275 741h10l-5-8zM1326 697h10l-5-8zM1372 688h10l-5-8zM1431 744h10l-5-8zM1473 726h10l-5-8zM1305 664h10l-5-8zM1509 674h10l-5-8z"/>
</g>

<!-- PANE 3 -->
<g clip-path="url(#c3)">
<path fill="none" stroke-width="65" d="M35 796.500H50M61 796.500H77M87 796.500H97M118 796.500H124M129 796.500H140M144 796.500H155M165 796.500H176M202 796.500H207M211 796.500H229M233 796.500H238M375 796.500H379M389 796.500H395M400 796.500H421M431 796.500H437M442 796.500H447M452 796.500H457M468 796.500H484M499 796.500H504M509 796.500H524M541 796.500H546M578 796.500H583M588 796.500H598M943 796.500H948M958 796.500H985M990 796.500H995M1000 796.500H1011M1068 796.500H1073M1078 796.500H1083M1115 796.500H1120M1256 796.500H1260M1266 796.500H1272M1298 796.500H1303M1318 796.500H1324" stroke="#ffa8a8"/>
<path fill="none" stroke-width="65" d="M254 796.500H264M275 796.500H291M301 796.500H306M311 796.500H322M342 796.500H348M614 796.500H640M656 796.500H666M671 796.500H682M692 796.500H698M703 796.500H708M739 796.500H744M749 796.500H755M760 796.500H765M776 796.500H791M806 796.500H812M817 796.500H822M843 796.500H859M875 796.500H880M906 796.500H912M916 796.500H927M1026 796.500H1037M1047 796.500H1052M1057 796.500H1062M1093 796.500H1104M1132 796.500H1141M1146 796.500H1151M1157 796.500H1162M1203 796.500H1214M1220 796.500H1225M1230 796.500H1235M1334 796.500H1350M1355 796.500H1360M1365 796.500H1392M1397 796.500H1402M1407 796.500H1412M1423 796.500H1433M1438 796.500H1449M1454 796.500H1459M1475 796.500H1485M1501 796.500H1517" stroke="#c3c3f4"/>
<path fill="none" stroke-width="65" d="M249 796.500H254M609 796.500H614M1021 796.500H1026M1084 796.500H1089M1125 796.500H1131M1183 796.500H1188M1287 796.500H1292M1308 796.500H1313M1329 796.500H1334" stroke="#6abb6a"/>
<path fill="none" stroke-width="65" d="M369 796.500H374M932 796.500H938M1063 796.500H1068M1105 796.500H1110M1177 796.500H1183M1245 796.500H1251M1292 796.500H1298M1313 796.500H1318" stroke="#bf6060"/>
<path d="M28 812L45 826L53 820L69 826L80 826L86 818L92 825L110 823L116 819L122 825L137 826L143 820L153 820L161 815L171 823L184 818L192 812zM390 812L402 822L420 826L433 823L437 826L441 818L449 817L465 815L480 826L492 820L500 817L504 823L512 822L522 825L533 823L539 812zM965 812L979 825L987 815L991 824L999 823L1018 823L1021 812zM1246 812L1248 823L1252 813L1264 815L1271 819L1280 812z" fill="#b97070" fill-opacity=".75"/>
<path d="M278 784L284 773L298 772L304 775L314 770L326 771L337 778L345 784zM640 784L640 778L650 773L660 775L669 777L677 771L689 773L709 772L722 770L730 775L738 782L746 778L758 780L767 776L779 775L791 772L809 771L824 772L836 782L852 778L864 778L879 779L885 784zM1377 784L1389 771L1410 772L1420 784zM1478 784L1482 772L1495 780L1500 784zM1205 784L1220 771L1232 773L1242 778V784z" fill="#8fd18f" fill-opacity=".75"/>
<path d="M28 770.500H1520M28 826.500H1520" stroke="#000" stroke-width="1.200" stroke-dasharray="5 4"/>
<path d="M28 784.500H1520" stroke="#1010c0" stroke-width="1.600"/>
<path d="M28 798.500H1520" stroke="#1010c0" stroke-width="1.800" stroke-dasharray="5 5"/>
<path d="M28 812.500H1520" stroke="#e81010" stroke-width="1.600"/>
<g fill="none" stroke-width="3.400" stroke-linejoin="round">
<path stroke="#a00000" d="M28 811L45 826L53 820L69 826L80 826L86 818L92 825L110 823L116 819L122 825L137 826L143 820L153 820L161 815L171 823L184 818L192 815M210 808L216 813L224 816L235 814M390 812L402 822L420 826L433 823L437 826L441 818L449 817L465 815L480 826L492 820L500 817L504 823L512 822L522 825L533 823M967 817L979 825L987 815L991 824L999 823L1018 823M1109 798L1118 813M1244 797L1248 823L1252 813L1264 815L1271 819L1280 812"/>
<path stroke="#0000a8" d="M192 815L200 811M235 814L245 800L255 787L261 780M376 812L386 811M533 823L539 812L549 807L575 802M596 800L600 800L608 798L616 797L637 785M901 795L913 797L922 792M938 800M954 803L960 808M1018 823L1022 793L1026 788L1034 786M1067 807L1073 803L1081 800M1109 798M1118 813L1126 793L1134 785M1280 800L1296 800M1312 798L1325 800L1337 795L1347 779"/>
<path stroke="#ff9a10" d="M200 811L210 808M261 780L271 785L278 783M345 782L359 792L367 797L376 812M575 802L582 802L588 798L596 800M879 779L885 783L901 795M922 792L938 800L944 807L954 803M960 808L967 817M1034 786L1046 793L1050 787L1058 795L1067 807M1081 800L1093 797L1109 798M1140 781L1148 778M1162 782L1171 788L1179 797L1185 783L1191 782L1199 784L1205 775M1296 800L1312 798M1355 782L1363 787L1377 777M1410 772L1420 785L1432 782M1458 782L1470 787L1482 772"/>
<path stroke="#0ac00a" d="M278 783L284 773L298 772L304 775L314 770L326 771L337 778L345 782M637 785L640 778L650 773L660 775L669 777L677 771L689 773L709 772L722 770L730 775L738 782L746 778L758 780L767 776L779 775L791 772L809 771L824 772L836 782L852 778L864 778L879 779M1134 785L1140 781M1148 778L1162 782M1179 797L1185 783M1205 775L1220 771L1232 773L1242 778M1347 779L1355 782M1377 777L1389 771L1410 772M1432 782L1446 779L1458 782M1482 772L1495 780L1507 780L1519 779"/>
</g>
<path fill="#a80000" d="M359 791h13l-6.500 11zM923 791h13l-6.500 11zM1054 791h13l-6.500 11zM1094 791h13l-6.500 11zM1168 791h13l-6.500 11zM1237 791h13l-6.500 11zM1283 792h13l-6.500 11zM1304 792h13l-6.500 11z"/>
<path fill="#0000c0" d="M241 804h13l-6.500-11zM601 804h13l-6.500-11zM1014 804h13l-6.500-11zM1075 805h13l-6.500-11zM1118 805h13l-6.500-11zM1175 804h13l-6.500-11zM1276 805h13l-6.500-11zM1299 804h13l-6.500-11zM1321 804h13l-6.500-11z"/>
</g>

<!-- PANE 4 -->
<g clip-path="url(#c4)">
<path d="M28 843H1870M28 889H1870M28 905H1870" stroke="#dcdcdc" stroke-dasharray="1 5"/>
<g clip-path="url(#hA)">
<rect x="28" y="830" width="54" height="94" fill="url(#pR)"/><rect x="82" y="830" width="40" height="94" fill="url(#pT)"/><rect x="122" y="830" width="13" height="94" fill="url(#pR)"/><rect x="135" y="830" width="33" height="94" fill="url(#pT)"/><rect x="168" y="830" width="22" height="94" fill="url(#pR)"/><rect x="190" y="830" width="24" height="94" fill="url(#pB)"/><rect x="214" y="830" width="27" height="94" fill="url(#pM)"/><rect x="241" y="830" width="20" height="94" fill="url(#pB)"/><rect x="261" y="830" width="25" height="94" fill="url(#pM)"/><rect x="286" y="830" width="12" height="94" fill="url(#pB)"/><rect x="298" y="830" width="12" height="94" fill="url(#pM)"/><rect x="310" y="830" width="21" height="94" fill="url(#pB)"/><rect x="331" y="830" width="28" height="94" fill="url(#pM)"/><rect x="359" y="875" width="21" height="49" fill="url(#pR)"/><rect x="380" y="875" width="93" height="49" fill="url(#pT)"/><rect x="473" y="875" width="13" height="49" fill="url(#pR)"/><rect x="486" y="875" width="16" height="49" fill="url(#pT)"/><rect x="502" y="875" width="22" height="49" fill="url(#pR)"/><rect x="524" y="875" width="27" height="49" fill="url(#pT)"/><rect x="551" y="830" width="24" height="94" fill="url(#pB)"/><rect x="575" y="830" width="21" height="94" fill="url(#pM)"/><rect x="596" y="830" width="32" height="94" fill="url(#pB)"/><rect x="628" y="830" width="20" height="94" fill="url(#pM)"/><rect x="648" y="830" width="12" height="94" fill="url(#pM)"/><rect x="660" y="830" width="25" height="94" fill="url(#pB)"/><rect x="685" y="830" width="33" height="94" fill="url(#pM)"/><rect x="718" y="830" width="10" height="94" fill="url(#pB)"/><rect x="728" y="830" width="34" height="94" fill="url(#pM)"/><rect x="762" y="830" width="39" height="94" fill="url(#pB)"/><rect x="801" y="830" width="84" height="94" fill="url(#pM)"/><rect x="885" y="875" width="67" height="49" fill="url(#pR)"/><rect x="952" y="875" width="41" height="49" fill="url(#pT)"/><rect x="993" y="875" width="16" height="49" fill="url(#pR)"/><rect x="1009" y="875" width="19" height="49" fill="url(#pT)"/><rect x="1028" y="830" width="14" height="94" fill="url(#pB)"/><rect x="1042" y="830" width="40" height="94" fill="url(#pM)"/><rect x="1082" y="875" width="48" height="49" fill="url(#pR)"/><rect x="1130" y="830" width="24" height="94" fill="url(#pB)"/><rect x="1154" y="830" width="57" height="94" fill="url(#pM)"/><rect x="1211" y="830" width="13" height="94" fill="url(#pB)"/><rect x="1224" y="830" width="24" height="94" fill="url(#pM)"/><rect x="1248" y="875" width="32" height="49" fill="url(#pR)"/><rect x="1280" y="875" width="53" height="49" fill="url(#pT)"/><rect x="1333" y="830" width="22" height="94" fill="url(#pB)"/><rect x="1355" y="830" width="14" height="94" fill="url(#pM)"/><rect x="1369" y="830" width="24" height="94" fill="url(#pB)"/><rect x="1393" y="830" width="12" height="94" fill="url(#pM)"/><rect x="1405" y="830" width="19" height="94" fill="url(#pM)"/><rect x="1424" y="830" width="60" height="94" fill="url(#pM)"/><rect x="1484" y="830" width="38" height="94" fill="url(#pM)"/>
</g>
<path d="M433 908L445 914L461 912L475 902L469 883L453 893L437 907zM531 918L543 910L559 887L575 877L551 872L543 893L535 905zM1018 893L1028 857L1036 852L1044 865L1028 887L1018 900zM1280 907L1296 880L1312 875L1329 873L1345 877L1329 885L1312 885L1300 888zM118 906L143 909L155 905L167 897L182 895L192 888L163 882L147 890L131 902zM192 888L216 877L190 875z" fill="url(#pG)"/>
<path d="M335 844L347 848L367 868L388 888L382 903L371 890L359 880L347 870L335 850zM685 842L691 837L722 843L754 857L762 872L742 872L720 855L705 850zM813 843L824 840L848 857L893 863L885 875L856 871L840 870L828 850zM1414 845L1434 857L1470 865L1478 870L1470 880L1428 871L1420 863L1410 850zM404 893L433 908L424 908L404 898zM475 902L490 912L504 920L531 918L522 907L498 900L486 907z" fill="url(#pP)"/>
<path d="M28 874.300H1522" stroke="#2222ee" stroke-width="2"/>
<g fill="none" stroke-width="3.600" stroke-linejoin="round">
<path stroke="#b000b0" d="M28 878L53 892L69 900L88 898L102 903L116 893L131 902L147 890L163 882L176 883L190 875L200 867L214 863L224 872L235 877L245 870L255 855L261 853L278 860L294 853L326 848L335 850L347 870L359 880L371 890L382 903L404 898L412 897L424 908L437 907L453 893L469 883L478 902L486 907L498 900L510 906L522 907L535 905L543 893L551 872L571 859L588 863L604 865L629 865L640 858L662 850L685 842L705 850L720 855L726 857L742 872L762 872L779 858L793 850L801 843L813 843L828 850L840 870L856 871L885 875L901 887L922 887L946 890L987 887L1003 892L1018 893L1028 857L1036 852L1056 858L1069 870L1081 878L1105 875L1122 887L1130 872L1138 865L1162 862L1183 877L1211 867L1240 865L1248 887L1254 907L1273 913L1280 907L1286 893L1296 880L1312 875L1329 873L1341 863L1353 850L1367 857L1381 853L1399 850L1410 850L1420 863L1428 871L1445 871L1455 872L1470 880L1478 875L1487 863L1507 868L1519 870"/>
<path stroke="#101050" d="M102 903L116 893M131 902L147 890L163 882M176 883L190 875L200 867L214 863M235 877L245 870L255 855L261 853M278 860L294 853L326 848M382 903L404 898M424 908L437 907L453 893L469 883M486 907L498 900M522 907L535 905L543 893L551 872L571 859M588 863L604 865M640 858L662 850L685 842M726 857L742 872L762 872L779 858L793 850L801 843M840 870L856 871M901 887L922 887M946 890L987 887M1018 893L1028 857L1036 852M1130 872L1138 865L1162 862M1273 913L1280 907L1286 893L1296 880L1312 875L1329 873L1341 863L1353 850M1367 857L1381 853L1399 850M1445 871L1455 872M1478 875L1487 863"/>
<path stroke="#ff9900" d="M28 882L49 890L69 900L88 902L102 906L118 906L143 909L155 905L167 897L182 895L192 888L216 877L237 874L249 872L265 860L286 857L306 848L335 844L347 848L367 868L388 888L404 893L420 897L433 908L445 914L461 912L475 902L490 912L504 920L531 918L543 910L559 887L575 877L596 873L629 867L640 857L664 848L691 837L722 843L754 857L783 850L803 842L824 840L848 857L868 860L893 863L913 877L926 883L958 889L987 894L1018 900L1028 887L1044 865L1060 867L1079 877L1105 873L1122 877L1138 875L1164 862L1187 873L1220 867L1240 862L1252 877L1268 903L1280 907L1300 888L1312 885L1329 885L1345 877L1357 863L1377 862L1397 850L1414 845L1434 857L1470 865L1478 870L1499 863L1515 870"/>
<path stroke="#66ee66" d="M102 906L118 906M143 909L155 905L167 897L182 895L192 888L216 877L237 874L249 872L265 860L286 857L306 848L335 844M445 914L461 912L475 902M504 920L531 918L543 910L559 887L575 877L596 873L629 867L640 857L664 848L691 837M716 842L725 844M754 857L783 850L803 842M848 857L868 860M1018 900L1028 887L1044 865M1079 877L1105 873M1122 877L1138 875L1164 862M1187 873L1220 867M1268 903L1280 907L1300 888L1312 885L1329 885L1345 877L1357 863M1377 862L1397 850L1414 845M1478 870L1499 863"/>
</g>
<path fill="#00e8e8" d="M27 887h12l-6-10zM67 907h12l-6-10zM79 907h12l-6-10zM230 881h12l-6-10zM282 863h12l-6-10zM428 914h12l-6-10zM487 914h12l-6-10zM633 869h12l-6-10zM794 849h12l-6-10zM950 892h12l-6-10zM1081 884h12l-6-10zM1128 876h12l-6-10zM1186 877h12l-6-10zM1222 869h12l-6-10zM1279 904h12l-6-10zM1476 875h12l-6-10zM1514 875h12l-6-10z"/>
<path fill="#eeee00" d="M42 884h12l-6 10zM73 896h12l-6 10zM225 869h12l-6 10zM267 854h12l-6 10zM293 848h12l-6 10zM480 903h12l-6 10zM626 859h12l-6 10zM647 848h12l-6 10zM804 837h12l-6 10zM1065 868h12l-6 10zM1102 870h12l-6 10zM1158 858h12l-6 10zM1215 859h12l-6 10zM1227 856h12l-6 10zM1393 846h12l-6 10zM1493 862h12l-6 10z"/>
</g>

<!-- PANE 5 -->
<rect x="28" y="925" width="1496" height="70" fill="#ffff80"/>
<g fill="none" stroke-width="70">
<path stroke="#40ff40" d="M35 960H45M50 960H56M82 960H97M118 960H129M150 960H160M212 960H223M244 960H260M275 960H291M311 960H322M337 960H353M369 960H384.500M400 960H421M437 960H452M630 960H635M640 960H645M666 960H682M698 960H704M734 960H744.500M760 960H781M791 960H802M828 960H838M891 960H917M927 960H938M943 960H969M985 960H1001M1051 960H1063M1115 960H1125M1146 960H1162M1178 960H1193M1339 960H1345M1412 960H1423M1439 960H1454M1475 960H1485M1501 960H1517"/>
<path stroke="#aeeeff" d="M170 960H181M489 960H499M515 960H531M551 960H614M1031 960H1037M1078 960H1084M1089 960H1099M1261 960H1280M1287 960H1313M1318 960H1329M1355 960H1392"/>
<path stroke="#6666bb" d="M165 960H170M478 960H489M499 960H515M531 960H551M1021 960H1026M1063 960H1073M1084 960H1089M1125 960H1131M1245 960H1251M1256 960H1261M1280 960H1287M1313 960H1318M1350 960H1355"/>
<path stroke="#700000" d="M160 960H165M473 960H478M1026 960H1031M1073 960H1078M1251 960H1256M1345 960H1350"/>
</g>
<path fill="#d01808" fill-opacity=".72" d="M28 995V980H49V995zM55 995V977H61V995zM61 995V980H69V995zM69 995V983H80V995zM97 995V980H108V995zM108 995V983H116V995zM129 995V980H147V995zM165 995V969H180V995zM180 995V973H192V995zM192 995V975H200V995zM200 995V982H214V995zM222 995V985H241V995zM257 995V985H269V995zM269 995V990H273V995zM292 995V986H308V995zM322 995V989H341V995zM347 995V984H367V995zM375 995V980H386V995zM386 995V983H398V995zM421 995V975H435V995zM449 995V973H461V995zM461 995V976H472V995zM489 995V958H498V995zM508 995V953H522V995zM522 995V962H531V995zM551 995V932H557V995zM557 995V936H566V995zM566 995V941H575V995zM575 995V946H584V995zM584 995V951H594V995zM594 995V958H604V995zM604 995V970H616V995zM616 995V978H626V995zM626 995V983H640V995zM646 995V984H664V995zM683 995V977H703V995zM703 995V983H726V995zM726 995V988H732V995zM750 995V985H760V995zM781 995V975H807V995zM807 995V982H826V995zM838 995V978H852V995zM852 995V985H877V995zM877 995V991H893V995zM903 995V987H929V995zM962 995V980H983V995zM999 995V980H1020V995zM1036 995V972H1056V995zM1075 995V967H1099V995zM1099 995V975H1113V995zM1130 995V973H1150V995zM1164 995V980H1181V995zM1199 995V977H1232V995zM1232 995V985H1244V995zM1260 995V953H1280V995zM1287 995V955H1298V995zM1298 995V960H1304V995zM1304 995V963H1318V995zM1318 995V970H1329V995zM1329 995V972H1343V995zM1355 995V963H1363V995zM1363 995V967H1391V995zM1391 995V975H1410V995zM1424 995V978H1442V995zM1454 995V977H1462V995zM1462 995V982H1474V995zM1485 995V972H1497V995zM1511 995V972H1522V995z"/>
<path fill="#1020c0" fill-opacity=".85" d="M49 995V976H55V995zM80 995V981H88V995zM88 995V976H97V995zM116 995V976H129V995zM147 995V982H153V995zM153 995V972H159V995zM159 995V967H165V995zM214 995V980H222V995zM241 995V983H257V995zM273 995V987H281V995zM281 995V984H292V995zM308 995V987H322V995zM341 995V988H347V995zM367 995V984H375V995zM398 995V983H408V995zM408 995V975H421V995zM435 995V973H449V995zM472 995V967H478V995zM478 995V957H489V995zM498 995V953H508V995zM531 995V961H535V995zM535 995V943H539V995zM539 995V933H551V995zM640 995V980H646V995zM664 995V982H675V995zM675 995V974H683V995zM732 995V983H750V995zM760 995V974H781V995zM826 995V977H838V995zM893 995V988H903V995zM929 995V985H946V995zM946 995V982H962V995zM983 995V975H999V995zM1020 995V967H1036V995zM1056 995V968H1075V995zM1113 995V970H1130V995zM1150 995V973H1164V995zM1181 995V973H1199V995zM1244 995V970H1250V995zM1250 995V951H1260V995zM1280 995V949H1287V995zM1343 995V961H1355V995zM1410 995V973H1424V995zM1442 995V977H1454V995zM1474 995V973H1485V995zM1497 995V973H1511V995z"/>
<path d="M28 971.700H1522" stroke="#000" stroke-width="1.100"/>

<!-- Dividers, axis -->
<path d="M28 625.500H1915M0 764.500H1915M28 829.500H1915M28 924.500H1915M28 995.500H1872M1872 22V995" stroke="#83959f" stroke-width="1.300" fill="none"/>

<!-- pane labels -->
<rect x="28" y="627" width="149.500" height="15" fill="#c9d9e2" stroke="#8a9ca8"/>
<rect x="31" y="631" width="4" height="8" fill="#6d7c84"/><rect x="35" y="631" width="4" height="8" fill="#111"/>
<text class="lb" x="44" y="638" textLength="131" lengthAdjust="spacingAndGlyphs">Sistema de trenes Doc v4 (f f)</text>
<rect x="28" y="765" width="73" height="16" fill="#c9d9e2" stroke="#8a9ca8"/>
<rect x="31" y="769" width="8" height="8" fill="#7a8a93"/>
<text class="lb" x="43" y="777" textLength="56" lengthAdjust="spacingAndGlyphs">Willy Doc (t)</text>
<rect x="28" y="830" width="127" height="16" fill="#c9d9e2" stroke="#8a9ca8"/>
<rect x="31" y="834" width="8" height="8" fill="#7a8a93"/>
<text class="lb" x="43" y="842" textLength="109" lengthAdjust="spacingAndGlyphs">Awesome Evolution Doc</text>
<rect x="28" y="926" width="176" height="15.500" fill="#c9d9e2" stroke="#8a9ca8"/>
<rect x="31" y="930" width="4" height="8" fill="#6d7c84"/><rect x="35" y="930" width="4" height="8" fill="#111"/>
<text class="lb" x="43" y="937.500" textLength="157" lengthAdjust="spacingAndGlyphs">Barra Fuerza Fondo Mercado v4 (f)</text>

<!-- Y AXIS main -->
<path d="M1872 36h6M1872 93h6M1872 203h6M1872 258h6M1872 313h6M1872 369h6M1872 423h6M1872 479h6M1872 534h6M1872 589h6M1872 637h6M1872 698h6M1872 734h6M1872 757h6M1872 685h4M1872 710h4M1872 771h6M1872 785h6M1872 798h6M1872 812h6M1872 823h6M1872 843h6M1872 889h6M1872 905h6M1872 919h6M1872 934h6" stroke="#55666f" fill="none"/>
<g class="ax">
<text class="ax" x="1879" y="40" textLength="23" lengthAdjust="spacingAndGlyphs">1,365</text>
<text class="ax" x="1879" y="97" textLength="18" lengthAdjust="spacingAndGlyphs">1,36</text>
<text class="ax" x="1879" y="207" textLength="18" lengthAdjust="spacingAndGlyphs">1,35</text>
<text class="ax" x="1879" y="262" textLength="23" lengthAdjust="spacingAndGlyphs">1,345</text>
<text class="ax" x="1879" y="317" textLength="18" lengthAdjust="spacingAndGlyphs">1,34</text>
<text class="ax" x="1879" y="373" textLength="23" lengthAdjust="spacingAndGlyphs">1,335</text>
<text class="ax" x="1879" y="427" textLength="18" lengthAdjust="spacingAndGlyphs">1,33</text>
<text class="ax" x="1879" y="483" textLength="23" lengthAdjust="spacingAndGlyphs">1,325</text>
<text class="ax" x="1879" y="538" textLength="18" lengthAdjust="spacingAndGlyphs">1,32</text>
<text class="ax" x="1879" y="593" textLength="23" lengthAdjust="spacingAndGlyphs">1,315</text>
</g>
<path d="M1872 135h5" stroke="#1a8a1a" stroke-width="1.500"/><path d="M1872 148h5" stroke="#a01010" stroke-width="1.500"/><path d="M1872 166h5" stroke="#1010a0" stroke-width="1.500"/>
<rect class="bx" x="1878" y="129" width="36" height="12.500"/>
<text class="ax" style="fill:#1a8a1a" x="1879.500" y="139.500" textLength="33" lengthAdjust="spacingAndGlyphs">1,35587</text>
<rect class="bx" x="1878" y="142" width="36" height="12.500"/>
<text class="ax" style="fill:#b01818" x="1879.500" y="152.500" textLength="33" lengthAdjust="spacingAndGlyphs">1,35525</text>
<rect class="bx" x="1878" y="160" width="36" height="12.500"/>
<text class="ax" style="fill:#1818a0" x="1879.500" y="170.500" textLength="33" lengthAdjust="spacingAndGlyphs">1,35334</text>

<!-- pane2 axis -->
<rect class="bx" x="1878" y="631" width="17" height="12"/><text class="ax" x="1880" y="641" textLength="14" lengthAdjust="spacingAndGlyphs">100</text>
<rect class="bx" x="1878" y="664" width="30" height="12"/><text class="ax" x="1880" y="674" textLength="26" lengthAdjust="spacingAndGlyphs">74,397</text>
<rect class="bx" x="1878" y="656" width="13" height="10"/><text class="ax" x="1880" y="665" textLength="10" lengthAdjust="spacingAndGlyphs">80</text>
<rect class="bx" x="1878" y="646" width="33" height="12.500"/><text class="ax" style="fill:#334" x="1880" y="656" textLength="28" lengthAdjust="spacingAndGlyphs">88,389</text>
<rect class="bx" x="1878" y="669" width="30" height="13"/><text class="ax" style="fill:#ee1a1a" x="1880" y="679.500" textLength="27" lengthAdjust="spacingAndGlyphs">72,595</text>
<text class="ax" x="1880" y="689" textLength="10" lengthAdjust="spacingAndGlyphs">60</text>
<rect class="bx" x="1878" y="692" width="13" height="12"/><text class="ax" style="fill:#1a1ad0" x="1880" y="702" textLength="10" lengthAdjust="spacingAndGlyphs">50</text>
<text class="ax" x="1880" y="714" textLength="10" lengthAdjust="spacingAndGlyphs">40</text>
<rect class="bx" x="1878" y="728" width="13" height="12"/><text class="ax" x="1880" y="738" textLength="10" lengthAdjust="spacingAndGlyphs">20</text>
<rect class="bx" x="1878" y="751" width="8" height="12"/><text class="ax" x="1880" y="761" textLength="5" lengthAdjust="spacingAndGlyphs">0</text>
<!-- pane3 axis -->
<text class="ax" x="1880" y="775" textLength="5" lengthAdjust="spacingAndGlyphs">0</text>
<rect class="bx" x="1893" y="775" width="20" height="12"/><text class="ax" style="fill:#1fb01f" x="1895" y="785" textLength="15" lengthAdjust="spacingAndGlyphs">066</text>
<rect class="bx" x="1878" y="779" width="14" height="12"/><text class="ax" style="fill:#1a1ab0" x="1879" y="789" textLength="12" lengthAdjust="spacingAndGlyphs">-25</text>
<rect class="bx" x="1878" y="792" width="14" height="12"/><text class="ax" style="fill:#1a1ab0" x="1879" y="802" textLength="12" lengthAdjust="spacingAndGlyphs">-50</text>
<text class="ax" style="fill:#d01010" x="1879" y="816" textLength="12" lengthAdjust="spacingAndGlyphs">-75</text>
<rect class="bx" x="1878" y="817" width="20" height="12"/><text class="ax" x="1879" y="827" textLength="17" lengthAdjust="spacingAndGlyphs">-100</text>
<!-- pane4 axis -->
<text class="ax" x="1879" y="847" textLength="18" lengthAdjust="spacingAndGlyphs">0,01</text>
<rect class="bx" x="1878" y="857" width="31" height="12"/><text class="ax" x="1880" y="866" textLength="27" lengthAdjust="spacingAndGlyphs">0,0000</text>
<rect class="bx" x="1878" y="864" width="33" height="13"/><text class="ax" style="fill:#ff9a10" x="1893" y="875" textLength="15" lengthAdjust="spacingAndGlyphs">0017</text>
<rect class="bx" x="1878" y="875" width="8" height="13"/><text class="ax" style="fill:#1a1ad0" x="1880" y="885.500" textLength="5" lengthAdjust="spacingAndGlyphs">0</text>
<text class="ax" x="1879" y="897" textLength="26" lengthAdjust="spacingAndGlyphs">-0,005</text>
<text class="ax" x="1879" y="909" textLength="20" lengthAdjust="spacingAndGlyphs">-0,01</text>
<text class="ax" x="1879" y="923" textLength="26" lengthAdjust="spacingAndGlyphs">-0,015</text>
<!-- pane5 axis -->
<text class="ax" x="1879" y="938" textLength="32" lengthAdjust="spacingAndGlyphs">0,50001</text>
<rect class="bx" x="1878" y="960" width="35" height="12.500"/><text class="ax" x="1880" y="970" textLength="32" lengthAdjust="spacingAndGlyphs">0,50000</text>
<rect class="bx" x="1878" y="972" width="35" height="13"/><text class="ax" style="fill:#ee1a1a" x="1880" y="982.500" textLength="32" lengthAdjust="spacingAndGlyphs">0,50000</text>

<!-- DATE AXIS -->
<g text-anchor="middle">
<text class="ax" x="37" y="1009">11</text><text class="ax" x="68" y="1009">13</text><text class="ax" x="105" y="1009">15</text><text class="ax" x="136" y="1009">16</text><text class="ax" x="166.500" y="1009">17</text><text class="ax" x="199" y="1009">18</text><text class="ax" x="230" y="1009">20</text><text class="ax" x="266" y="1009">22</text><text class="ax" x="297.500" y="1009">23</text><text class="ax" x="328.600" y="1009">24</text><text class="ax" x="359.600" y="1009">25</text><text class="ax" x="391" y="1009">27</text><text class="ax" x="427" y="1009">29</text><text class="ax" x="459" y="1009">30</text><text class="ax" x="490.600" y="1009">31</text><text class="ax" x="521.600" y="1009">ago</text><text class="ax" x="552.600" y="1009">03</text><text class="ax" x="590" y="1009">05</text><text class="ax" x="621" y="1009">06</text><text class="ax" x="652.700" y="1009">07</text><text class="ax" x="683.700" y="1009">08</text><text class="ax" x="714.700" y="1009">10</text><text class="ax" x="752" y="1009">12</text><text class="ax" x="783" y="1009">13</text><text class="ax" x="814" y="1009">14</text><text class="ax" x="846" y="1009">15</text><text class="ax" x="877" y="1009">17</text><text class="ax" x="912.600" y="1009">19</text><text class="ax" x="944.500" y="1009">20</text><text class="ax" x="975.500" y="1009">21</text><text class="ax" x="1006.500" y="1009">22</text><text class="ax" x="1038.800" y="1009">24</text><text class="ax" x="1074.700" y="1009">26</text><text class="ax" x="1106.500" y="1009">27</text><text class="ax" x="1137.600" y="1009">28</text><text class="ax" x="1168.600" y="1009">29</text><text class="ax" x="1207" y="1009">sept</text><text class="ax" x="1236.700" y="1009">02</text><text class="ax" x="1267.700" y="1009">03</text><text class="ax" x="1300" y="1009">04</text><text class="ax" x="1330.600" y="1009">05</text><text class="ax" x="1361.800" y="1009">07</text><text class="ax" x="1398.700" y="1009">09</text><text class="ax" x="1430" y="1009">10</text><text class="ax" x="1460.600" y="1009">11</text><text class="ax" x="1492.600" y="1009">12</text><text class="ax" x="1523.800" y="1009">14</text><text class="ax" x="1560.700" y="1009">16</text><text class="ax" x="1592" y="1009">17</text><text class="ax" x="1623" y="1009">18</text><text class="ax" x="1654" y="1009">19</text><text class="ax" x="1685.400" y="1009">21</text><text class="ax" x="1721.500" y="1009">23</text><text class="ax" x="1754" y="1009">24</text><text class="ax" x="1784.700" y="1009">25</text><text class="ax" x="1816" y="1009">26</text><text class="ax" x="1848" y="1009">28</text>
</g>

<!-- BOTTOM BAR -->
<rect x="0" y="1010" width="1915" height="21" fill="#9bb7c4"/>
<path d="M0 1010.500H1915" stroke="#7f95a0" stroke-width="1.200"/>
<rect x="148" y="1013" width="1617" height="15" fill="#a2bdca" stroke="#85a0ad"/>
<rect x="1670" y="1013.500" width="50" height="14" fill="#b5d2de" stroke="#8aa5b2"/>
<rect x="148" y="1013" width="11" height="15" fill="#bcd4df" stroke="#85a0ad"/><rect x="1755" y="1013" width="10" height="15" fill="#bcd4df" stroke="#85a0ad"/>
<path d="M155 1018l-3 3 3 3M1758 1018l3 3-3 3" stroke="#222" stroke-width="1.200" fill="none"/>
<text x="135" y="1026" style="font-size:12px;fill:#51656f">«</text>
<path d="M8 1028L12 1016L14 1026L18 1015M18 1026L23 1013" stroke="#8a5a30" stroke-width="1.500" fill="none"/><path d="M14 1027L22 1014L24 1016L17 1028z" fill="#f0c020" stroke="#705020"/>
<path d="M45 1019L34 1023L45 1028" stroke="#eef4f8" stroke-width="2" fill="none"/><circle cx="34" cy="1023" r="2.500" fill="#fff"/><circle cx="45" cy="1018" r="2.500" fill="#fff"/><circle cx="45" cy="1028" r="2.500" fill="#333"/>
<rect x="53" y="1013" width="10" height="12" fill="#e8f0f5" stroke="#4a7ab0"/><rect x="57" y="1017" width="10" height="9" fill="#3a80d0"/>
<rect x="76" y="1013" width="10" height="15" fill="#f2f2f2" stroke="#444"/><path d="M78 1017h6M78 1020h6" stroke="#c03030"/><path d="M78 1023h6" stroke="#209020"/>
<path d="M101 1012V1030" stroke="#444"/><path d="M95 1016h12M97 1021h12M95 1026h12" stroke="#20a020" stroke-width="2.500"/><path d="M100 1021h7" stroke="#d03030" stroke-width="2.500"/>
<rect x="115" y="1013" width="10" height="10" fill="#cfe8f5" stroke="#2060b0"/><rect x="120" y="1018" width="10" height="10" fill="#f0f8ff" stroke="#2060b0"/><path d="M122 1025l3-3 2 2 2-3" stroke="#30a030" fill="none"/>
<path d="M1772 1023a6 6 0 1 1 6 6" stroke="#8ab0d8" stroke-width="2.500" fill="none"/><path d="M1768 1020l4 6 4-5z" fill="#5a8fd0"/>
<path d="M1806 1023a6 6 0 1 0-6 6" stroke="#8ab0d8" stroke-width="2.500" fill="none"/><path d="M1810 1020l-4 6-4-5z" fill="#5a8fd0"/>
<path d="M1817 1026l5-5 3 3-5 5z" fill="#d03030" stroke="#222"/><rect x="1823" y="1014" width="6" height="10" fill="#eaf5ea" stroke="#209020"/>
<circle cx="1842" cy="1020" r="5" fill="#fff" stroke="#222" stroke-width="1.500"/><path d="M1846 1024l3 4" stroke="#222" stroke-width="2.500"/><path d="M1852 1014v10M1838 1029h8" stroke="#1a60d0" stroke-width="1.600"/>
<circle cx="1865" cy="1020" r="5" fill="#fff" stroke="#222" stroke-width="1.500"/><path d="M1869 1024l3 4" stroke="#222" stroke-width="2.500"/><path d="M1862 1020h6" stroke="#1a60d0" stroke-width="1.600"/>
<circle cx="1887" cy="1020" r="5" fill="#fff" stroke="#222" stroke-width="1.500"/><path d="M1891 1024l3 4" stroke="#222" stroke-width="2.500"/><path d="M1884 1020h6M1887 1017v6" stroke="#1a60d0" stroke-width="1.600"/>
<path d="M1903 1015h10M1903 1018h10" stroke="#555" stroke-dasharray="2 1" stroke-width="2"/><path d="M1909 1019v6M1906 1024h6l-3 4z" fill="#1a60d0" stroke="#1a60d0"/>

<!-- LEFT SIDEBAR -->
<rect x="0" y="22" width="28" height="1009" fill="#9bb7c4"/>
<path d="M27.500 22V1031" stroke="#73909d" stroke-width="1.200"/>
<path d="M10 30l4-3 4 3" stroke="#7d97a3" stroke-width="1.500" fill="none"/>
<rect x="4" y="36" width="21" height="20" rx="2" fill="#8ea9b5" stroke="#6f8995"/>
<path d="M11 41l0 12 3-3 3 5 2-1-3-5 4 0z" fill="#d7dfe3" stroke="#41515a" stroke-width=".8"/>
<g fill="none" stroke="#2b3a42" stroke-width="1.400">
<circle cx="13" cy="67" r="4.500"/><path d="M16 71l4 4" stroke-width="2.400"/>
<rect x="6" y="85" width="14" height="11" stroke="#2468c8" stroke-dasharray="2 1" stroke-width="1"/><circle cx="14" cy="88" r="4.500"/><path d="M17 92l4 4" stroke-width="2.400"/>
</g>
<path d="M14 106c-4 0-4 4-5 8l-2 3h14l-2-3c-1-4-1-8-5-8zM6 106l4 3M22 106l-4 3" fill="#f0d030" stroke="#3f6090"/>
<path d="M14 127c-4 0-4 4-5 8l-2 3h14l-2-3c-1-4-1-8-5-8z" fill="#f0d030" stroke="#806a10"/>
<g stroke="#1a50c0" stroke-width="1.500" fill="none">
<path d="M8 148v14M6 155h5l3-6 3 9h4"/><path d="M8 178h12M8 182h8" stroke="#c07050"/><path d="M8 198h12M8 202h12M8 206h10" stroke="#70a070"/>
<rect x="8" y="216" width="14" height="12"/>
</g>
<text x="17" y="161" style="font-size:9px;font-weight:bold;fill:#1a50c0">F</text><text x="18" y="186" style="font-size:9px;font-weight:bold;fill:#1a50c0">F</text><text x="18" y="208" style="font-size:9px;font-weight:bold;fill:#1a50c0">F</text>
<rect x="8" y="238" width="14" height="12" fill="#a08890" stroke="#e01818" stroke-width="1.500"/>
<path d="M8 272L20 259" stroke="#111" stroke-width="2"/><path d="M21 258l-6 1 4 4z" fill="#111"/>
<rect x="7" y="281" width="14" height="14" rx="2" fill="#8fb0c8" stroke="#5580a0"/><text x="10" y="292" style="font-size:11px;font-weight:bold;fill:#111">T</text>
<circle cx="14" cy="309" r="7" fill="#8fc0a8" stroke="#2a80d0"/><text x="10.500" y="313" style="font-size:10px;font-weight:bold;fill:#1a6020">T</text>
<path d="M9 339L19 327" stroke="#333" stroke-width="1.500"/><circle cx="9" cy="339" r="2" fill="none" stroke="#333"/><circle cx="19" cy="327" r="2" fill="none" stroke="#333"/>
<path d="M11 354h12" stroke="#30b030" stroke-width="1.600"/><circle cx="13" cy="354" r="2" fill="none" stroke="#30b030"/>
<path d="M11 376h12" stroke="#e01818" stroke-width="1.600"/><circle cx="13" cy="376" r="2" fill="none" stroke="#e01818"/>
<path d="M7 402l13-11 3 4-13 11z" fill="#a9b5bb" stroke="#44525a"/>
<rect x="7" y="412" width="15" height="16" fill="#8fb5b8"/><path d="M7 414h15" stroke="#40a040" stroke-dasharray="1 1"/><path d="M7 426h15" stroke="#c06060" stroke-dasharray="1 1"/><path d="M8 424l4-4 3 2 5-6" stroke="#eef" fill="none"/>
<ellipse cx="14" cy="441" rx="7" ry="5" fill="#b08a90" stroke="#e01818" stroke-width="1.400"/>
<ellipse cx="14" cy="463" rx="7" ry="5" fill="#9a9a8a" stroke="#8a5a20" stroke-width="1.400"/>
<ellipse cx="14" cy="485" rx="7" ry="5" fill="#80a890" stroke="#1a801a" stroke-width="1.400"/>
<ellipse cx="14" cy="507" rx="7" ry="5" fill="#78d078" stroke="#20d020" stroke-width="1.400"/>
<path d="M6 537L22 521" stroke="#111" stroke-width="1.200"/><path d="M6 559L22 544" stroke="#30b030" stroke-width="1.500"/><path d="M6 581L22 566" stroke="#e01818" stroke-width="1.500"/>
<path d="M5 596.500H23" stroke="#111" stroke-width="1.200"/><path d="M5 618.500H23" stroke="#f09080" stroke-width="2"/><path d="M5 640.500H23" stroke="#10e010" stroke-width="2"/><path d="M5 662.500H23" stroke="#108a10" stroke-width="2"/><path d="M5 684.500H23" stroke="#e01818" stroke-width="2"/><path d="M5 706H23" stroke="#5a98f0" stroke-width="2"/><path d="M5 728H23" stroke="#1a3ac0" stroke-width="2"/><path d="M14.500 741V759" stroke="#111" stroke-width="1.200"/>
<path d="M7 776L17 765M7 776H22" stroke="#d03030" fill="none"/><text x="17" y="775" style="font-size:8px;fill:#1a50c0">α</text>
<circle cx="13" cy="794" r="6.500" fill="none" stroke="#d07040"/><path d="M10 794h6M13 791v6" stroke="#1a50c0"/>
<path d="M6 820L11 810L15 824L21 808" stroke="#1a50c0" fill="none"/><text x="5" y="812" style="font-size:7px;fill:#1a50c0">3</text><text x="19" y="812" style="font-size:7px;fill:#1a50c0">5</text>
<path d="M7 845L13 832L19 846" stroke="#1a50c0" fill="none"/><text x="15" y="836" style="font-size:7px;fill:#1a50c0">b</text>
<path d="M7 861l4 5 9-13-9 8z" fill="#3cb43c" stroke="#1f7a1f"/>
<path d="M8 880h3l3-7 2 1-1 6h5l-1 9H8z" fill="#50b050" stroke="#2a702a"/>
<path d="M8 897l6 5 5-5 3 3-5 5 5 5-3 3-5-5-6 5-2-3 5-5-5-5z" fill="#f01010"/>
<path d="M14 919l8 14H6z" fill="#f0c020" stroke="#b08010"/><path d="M14 923v6M14 931v1" stroke="#222" stroke-width="1.600"/>
<rect x="0" y="945" width="28" height="13" fill="#a9c5d1" stroke="#7f95a0"/>
<path d="M10 950l4 3 4-3" stroke="#333" stroke-width="1.400" fill="none"/>
<rect x="8" y="964" width="12" height="14" fill="#f3f3f3" stroke="#444"/><circle cx="10" cy="965" r="4" fill="#30a030"/><path d="M14 970l6 6" stroke="#d03030"/>
<path d="M7 997h3M12 997h3M17 997h3" stroke="#333" stroke-width="2"/><path d="M14 1003l4-3h-8z" fill="#222"/>

<!-- TOP BAR -->
<rect x="0" y="0" width="1915" height="22" fill="url(#tb)"/>
<path d="M0 .5H1915" stroke="#4f6b79"/><path d="M0 22H1915" stroke="#5e7a87" stroke-width="1.300"/>
<path d="M7 11v6M12 8v6M17 5v6" stroke="#3cb050" stroke-width="2.500"/><path d="M22 0V22M38 0V22M98 0V22M293 0V22M348 0V22M411 0V22M493 0V22M580 0V22M592 0V22" class="sp" fill="none"/>
<g fill="#7b8f9a"><rect x="27" y="6" width="6" height="4" rx="1.500"/><rect x="27" y="13" width="6" height="4" rx="1.500"/></g>
<text class="lb" x="43" y="16" textLength="40" lengthAdjust="spacingAndGlyphs">GBPUSD</text><path d="M88 11l3 3 3-3" stroke="#333" stroke-width="1.200" fill="none"/>
<rect class="bt" x="104" y="4" width="26" height="15" rx="2.500"/><text class="lb" x="107" y="16" textLength="20" lengthAdjust="spacingAndGlyphs">144s</text>
<rect class="bt" x="133" y="4" width="24" height="15" rx="2.500"/><text class="lb" x="136" y="16" textLength="18" lengthAdjust="spacingAndGlyphs">12m</text>
<rect class="bt" x="160" y="4" width="24" height="15" rx="2.500"/><text class="lb" x="163" y="16" textLength="18" lengthAdjust="spacingAndGlyphs">56m</text>
<rect class="bt" x="187" y="4" width="17" height="15" rx="2.500"/><text class="lb" x="190" y="16" textLength="11" lengthAdjust="spacingAndGlyphs">1h</text>
<rect class="bp" x="207" y="4" width="17" height="15" rx="2.500"/><text class="lb" x="210" y="16" textLength="11" lengthAdjust="spacingAndGlyphs">4h</text>
<rect class="bt" x="228" y="4" width="11" height="15" rx="2.500"/><text class="lb" x="230" y="16" textLength="7" lengthAdjust="spacingAndGlyphs">D</text>
<rect class="bt" x="243" y="4" width="14" height="15" rx="2.500"/><text class="lb" x="245" y="16" textLength="10" lengthAdjust="spacingAndGlyphs">W</text>
<rect class="bt" x="261" y="4" width="12" height="15" rx="2.500"/><text class="lb" x="263" y="16" textLength="8" lengthAdjust="spacingAndGlyphs">M</text>
<rect class="bt" x="278" y="4" width="11" height="15" rx="2.500"/><text class="lb" x="280" y="16" textLength="7" lengthAdjust="spacingAndGlyphs">Q</text>
<text class="lb" x="299" y="16" textLength="34" lengthAdjust="spacingAndGlyphs">4 horas</text><path d="M340 11l3 3 3-3" stroke="#333" stroke-width="1.200" fill="none"/>
<rect class="bt" x="352" y="4" width="22" height="15" rx="2.500"/><text class="lb" x="354" y="16" textLength="17" lengthAdjust="spacingAndGlyphs">5kU</text>
<rect class="bp" x="378" y="4" width="28" height="15" rx="2.500"/><text class="lb" x="381" y="16" textLength="22" lengthAdjust="spacingAndGlyphs">10kU</text>
<text class="lb" x="415" y="16" textLength="62" lengthAdjust="spacingAndGlyphs">10 k unidades</text><path d="M484 11l3 3 3-3" stroke="#333" stroke-width="1.200" fill="none"/>
<path d="M499 8c3-5 5 3 8 3s4-5 8-2" stroke="#c04030" fill="none" stroke-width="1.200"/><path d="M499 12c3-6 6 5 8 4s5-4 8-2" stroke="#20a050" fill="none" stroke-width="1.200"/><path d="M500 20v-3M504 20v-2M508 20v-4M512 20v-3" stroke="#20b040" stroke-width="2.500"/>
<text class="lb" x="520" y="16" textLength="54" lengthAdjust="spacingAndGlyphs">Indicadores</text><path d="M582 11l3 3 3-3" stroke="#333" stroke-width="1.200" fill="none"/>
<rect x="601" y="7" width="8" height="9" fill="#f0f3f5" stroke="#98a8b0"/><text x="603.500" y="15" style="font-size:8px;fill:#667">i</text>
<circle cx="622" cy="11.500" r="3.500" fill="#8c9aa2"/>
<rect x="631" y="4" width="38" height="14" rx="2.500" fill="#f25454"/><text x="634" y="15.500" style="fill:#fff" textLength="32" lengthAdjust="spacingAndGlyphs">-0,14 %</text>
<text class="lb" x="673" y="16" textLength="55" lengthAdjust="spacingAndGlyphs">12 sept 2025</text>
<rect x="732" y="4" width="48" height="14.500" rx="5" fill="#5ab2e6" stroke="#3a8cc0"/><text x="735" y="15.500" style="fill:#1a3040" textLength="42" lengthAdjust="spacingAndGlyphs">GBP/USD</text>
<path d="M1851 0V22M1871 0V22" class="sp" fill="none"/>
<path d="M1858 17a6 6 0 0 1 0-12" stroke="#f05050" stroke-width="2.400" fill="none"/><path d="M1853 12l5 5 2-5z" fill="#f05050"/>
<path d="M1861 5a6 6 0 0 1 1 12" stroke="#18a838" stroke-width="2.400" fill="none"/><path d="M1859 10l5-6 4 6z" fill="#18a838"/>
<path d="M1876 16h8" stroke="#8aa0ad" stroke-width="2"/><rect x="1891" y="9" width="6" height="6" fill="none" stroke="#8aa0ad" stroke-width="1.300"/><rect x="1893" y="7" width="6" height="6" fill="none" stroke="#8aa0ad" stroke-width="1.300"/><path d="M1904 7l8 9M1912 7l-8 9" stroke="#8aa0ad" stroke-width="1.800"/>

<!-- TAB ROW -->
<rect x="28" y="23" width="552" height="14.500" fill="#c8d8e1"/>
<path d="M28 37.500H580M580 23V37.500M59 23V37M105 23V37M122 23V37M186 23V37M323 23V37M438 23V37" stroke="#8fa3ae" fill="none"/>
<rect x="30" y="24" width="10" height="12" fill="#eaeef0" stroke="#9aacb5"/><path d="M35 26v5M32 30l3 4 3-4z" fill="#e02020" stroke="#e02020"/>
<rect x="45" y="24" width="10" height="12" fill="#eaeef0" stroke="#9aacb5"/><path d="M50 34v-5M47 30l3-4 3 4z" fill="#1aa01a" stroke="#1aa01a"/>
<rect x="62" y="26" width="8" height="8.500" fill="#dfe6ea" stroke="#7f8f98"/><text class="lb" x="74" y="34" textLength="29" lengthAdjust="spacingAndGlyphs">Precio</text>
<path d="M110 26.500h2M113 26.500h6M110 30h2M113 30h6M110 33.500h2M113 33.500h6" stroke="#334" stroke-width="1.300"/>
<rect x="127" y="26" width="7" height="8.500" fill="#dfe6ea" stroke="#7f8f98"/><text class="lb" x="138" y="34" textLength="46" lengthAdjust="spacingAndGlyphs">Cierre (W)</text>
<rect x="192" y="26" width="7" height="8.500" fill="#7b8c96"/><text class="lb" x="202" y="34" textLength="119" lengthAdjust="spacingAndGlyphs">Tunel Domenec v4 (t t t t t)</text>
<path d="M328 26v9" stroke="#e0a020" stroke-width="1.500"/><path d="M330.500 26v9" stroke="#1a40c0" stroke-width="1.500"/><path d="M333 26v9" stroke="#e8d000" stroke-width="1.500"/><path d="M335 26v9" stroke="#20a020" stroke-width="1"/>
<text class="lb" x="339" y="34" textLength="97" lengthAdjust="spacingAndGlyphs">Control Total Doc v.6</text>
<rect x="442" y="26" width="8" height="9" fill="#000"/><text class="lb" x="454" y="34" textLength="123" lengthAdjust="spacingAndGlyphs">Multi Avisos (3 f 3 1,5 70 f f)</text>
</svg>
</body></html>
